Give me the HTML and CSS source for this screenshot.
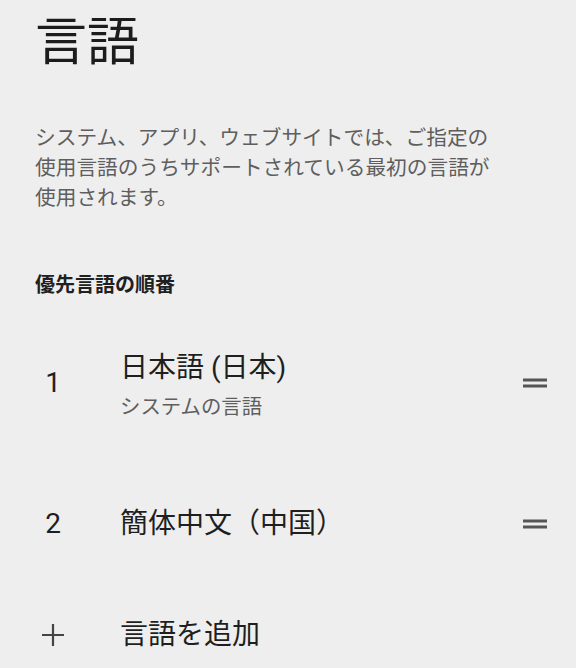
FILE: index.html
```html
<!DOCTYPE html>
<html lang="ja">
<head>
<meta charset="utf-8">
<title>言語</title>
<link rel="stylesheet" href="styles.css">
</head>
<body>
<main class="page">
  <h1 class="title">言語</h1>
  <p class="desc">システム、アプリ、ウェブサイトでは、ご指定の使用言語のうちサポートされている最初の言語が使用されます。</p>
  <h2 class="section-label">優先言語の順番</h2>
  <ul class="lang-list">
    <li class="row row-first">
      <span class="lead">1</span>
      <div class="text text-two">
        <div class="primary">日本語 (日本)</div>
        <div class="secondary">システムの言語</div>
      </div>
      <svg class="handle" viewBox="0 0 24 24" width="36" height="36" aria-hidden="true"><path d="M20 9H4v2h16V9zM4 15h16v-2H4v2z"/></svg>
    </li>
    <li class="row">
      <span class="lead">2</span>
      <div class="text">
        <div class="primary">簡体中文（中国）</div>
      </div>
      <svg class="handle" viewBox="0 0 24 24" width="36" height="36" aria-hidden="true"><path d="M20 9H4v2h16V9zM4 15h16v-2H4v2z"/></svg>
    </li>
    <li class="row">
      <span class="lead">
        <svg class="plus" viewBox="0 0 24 24" width="24" height="24" aria-hidden="true"><path d="M12 1v22M1 12h22"/></svg>
      </span>
      <div class="text">
        <div class="primary">言語を追加</div>
      </div>
    </li>
  </ul>
</main>
</body>
</html>
```

FILE: styles.css
```css
html, body {
  margin: 0;
  padding: 0;
  background: #eeeeee;
}

body {
  font-family: "Roboto", "Noto Sans CJK JP", sans-serif;
  color: #1f1f1f;
  width: 576px;
  height: 668px;
  overflow: hidden;
}

.page {
  padding: 0 23px 0 35px;
}

.title {
  margin: 0;
  padding-top: 13px;
  font-size: 52px;
  line-height: 60px;
  font-weight: 400;
  color: #1c1c1c;
}

.desc {
  margin: 50px 0 0;
  max-width: 465px;
  font-size: 20.7px;
  line-height: 30px;
  color: #5e5e5e;
}

.section-label {
  margin: 57px 0 0;
  font-size: 20px;
  line-height: 30px;
  font-weight: 700;
  color: #202020;
}

.lang-list {
  list-style: none;
  margin: 0;
  padding: 0;
}

.row {
  display: flex;
  align-items: center;
  padding: 38px 0;
}

.row-first {
  padding: 44px 0 47px;
}

.lead {
  width: 36px;
  flex: none;
  margin-right: 49px;
  text-align: center;
  font-size: 28px;
  line-height: 34px;
  color: #1f1f1f;
  display: flex;
  justify-content: center;
  align-items: center;
}

.text {
  flex: 1;
  min-width: 0;
}

.text-two {
  padding-top: 7px;
}

.primary {
  font-size: 28px;
  line-height: 34px;
  color: #1f1f1f;
}

.secondary {
  margin-top: 8px;
  font-size: 20.4px;
  line-height: 28px;
  color: #5e5e5e;
}

.handle {
  flex: none;
  fill: #555555;
  display: block;
}

.plus {
  display: block;
  stroke: #444444;
  stroke-width: 2.2;
  fill: none;
}
```
